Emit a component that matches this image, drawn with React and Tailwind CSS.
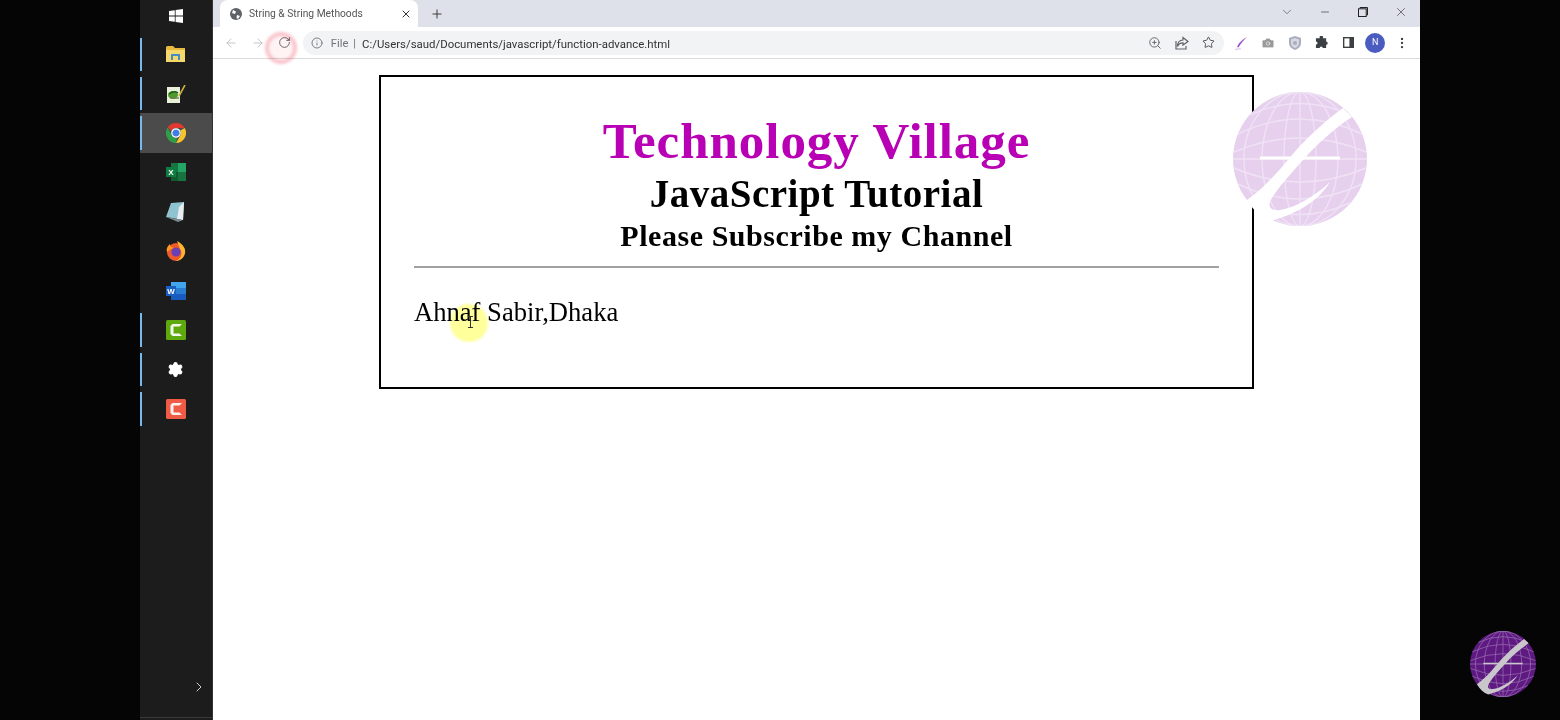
import React from 'react';
import { ArrowLeft, ArrowRight, RotateCw, Info, ZoomIn, Star, Camera, Plus, X, Minus, ChevronDown, ChevronRight, EllipsisVertical, Settings } from 'lucide-react';

// globe logo, used as the big watermark and the small corner badge
const Globe = ({ fill, line, swoosh, className }) => (
  <svg viewBox="0 0 134 134" className={className}>
    <circle cx="67" cy="67" r="67" fill={fill} />
    <g fill="none" stroke={line} strokeWidth="1.4">
      <ellipse cx="67" cy="67" rx="16" ry="67" />
      <ellipse cx="67" cy="67" rx="38" ry="67" />
      <ellipse cx="67" cy="67" rx="56" ry="67" />
      <path d="M67 0V134" />
      <path d="M0 67H134" />
      <path d="M17 23Q67 0 117 23" />
      <path d="M5 42Q67 12 129 42" />
      <path d="M5 92Q67 122 129 92" />
      <path d="M17 111Q67 134 117 111" />
      <path d="M1 60Q67 32 133 60" />
      <path d="M1 76Q67 104 133 76" />
    </g>
    <path d="M27 66H107" stroke={swoosh} strokeWidth="3" />
    <path
      d="M110 16C88 32 72 48 59 63C48 76 32 96 14 108C20 118 28 126 37 129C57 124 84 112 97 90C82 104 62 116 47 118C39 119 35 116 37 110C40 102 52 88 70 68C84 52 102 36 119 25Z"
      fill={swoosh}
    />
  </svg>
);

const WindowsIcon = () => (
  <svg viewBox="0 0 14 14" className="w-[14px] h-[14px]" fill="#fff">
    <path d="M0 2L5.8 1.2V6.6H0ZM6.6 1L14 0V6.6H6.6ZM0 7.4H5.8V12.8L0 12ZM6.6 7.4H14V14L6.6 13Z" />
  </svg>
);

const FolderIcon = () => (
  <svg viewBox="0 0 19 16" className="w-[19px] h-[16px]">
    <path d="M0 1.5Q0 0 1.5 0H7L9 2H19V16H0Z" fill="#e8b93f" />
    <path d="M0 4H19V16H0Z" fill="#f6d76b" />
    <path d="M5 8H14V14H5Z" fill="#3f8fc4" />
    <path d="M7 10H12V14H7Z" fill="#f6d76b" />
  </svg>
);

const NotesIcon = () => (
  <svg viewBox="0 0 20 18" className="w-[20px] h-[18px]">
    <path d="M1 2H14V18H1Z" fill="#e9f1d8" />
    <ellipse cx="7" cy="10" rx="5" ry="4" fill="#4f9a2f" />
    <path d="M3 9Q8 5 12 8" stroke="#1f5c16" strokeWidth="1.4" fill="none" />
    <path d="M4 13H13" stroke="#6b7f4a" strokeWidth="1.4" />
    <path d="M13 11L19 0" stroke="#c9b43c" strokeWidth="1.6" />
  </svg>
);

const ChromeIcon = ({ size = 20 }) => (
  <svg viewBox="0 0 20 20" width={size} height={size}>
    <path d="M10 0A10 10 0 0 1 18.7 5H10A5 5 0 0 0 5.5 8L1.7 4.4A10 10 0 0 1 10 0Z" fill="#e0392f" />
    <path d="M18.7 5A10 10 0 0 1 10 20L14.3 12.5A5 5 0 0 0 14.3 7.5Z" fill="#f7c52b" />
    <path d="M10 20A10 10 0 0 1 1.7 4.4L5.7 12.5A5 5 0 0 0 11 15Z" fill="#2f9e49" />
    <circle cx="10" cy="10" r="4.2" fill="#3f7fe0" stroke="#fff" strokeWidth="1.2" />
  </svg>
);

const ExcelIcon = () => (
  <svg viewBox="0 0 20 18" className="w-[20px] h-[18px]">
    <path d="M5 0H20V18H5Z" fill="#17733f" />
    <path d="M12 0H20V9H12Z" fill="#23a566" />
    <path d="M5 9H12V18H5Z" fill="#0f5c31" />
    <rect x="0" y="4" width="10" height="10" fill="#107c41" />
    <text x="5" y="12" fontSize="8" fontWeight="700" fill="#fff" textAnchor="middle" fontFamily="Liberation Sans, sans-serif">X</text>
  </svg>
);

const PadIcon = () => (
  <svg viewBox="0 0 20 20" className="w-[20px] h-[20px]">
    <path d="M5 1L18 0L17 18L0 15Z" fill="#8fc3cf" />
    <path d="M13 5L18 0L17 18L11 17Z" fill="#e8ecec" />
    <path d="M0 15L11 17L17 18L12 20Z" fill="#7a8a8e" />
  </svg>
);

const FirefoxIcon = () => (
  <svg viewBox="0 0 20 20" className="w-[20px] h-[20px]">
    <circle cx="10" cy="11" r="9" fill="#ef5a2a" />
    <path d="M11 0C17 3 20 8 19 12C18 17 13 20 10 20C15 18 17 12 14 8C13 5 12 3 11 0Z" fill="#ffb52e" />
    <path d="M1 11C0 7 2 5 4 3C4 6 6 6 8 7C4 8 3 10 1 11Z" fill="#ff9a1f" />
    <circle cx="10" cy="11" r="4.6" fill="#6b3fb5" />
  </svg>
);

const WordIcon = () => (
  <svg viewBox="0 0 20 18" className="w-[20px] h-[18px]">
    <path d="M5 0H20V18H5Z" fill="#185abd" />
    <path d="M5 0H20V6H5Z" fill="#41a5ee" />
    <path d="M5 6H20V12H5Z" fill="#2b7cd3" />
    <rect x="0" y="4" width="10" height="10" fill="#1a5fc0" />
    <text x="5" y="12" fontSize="8" fontWeight="700" fill="#fff" textAnchor="middle" fontFamily="Liberation Sans, sans-serif">W</text>
  </svg>
);

const CamtasiaIcon = ({ bg }) => (
  <svg viewBox="0 0 20 20" className="w-[20px] h-[20px]">
    <rect width="20" height="20" rx="1.5" fill={bg} />
    <path d="M16 4H6.5L4.5 6V14L6.5 16H16L13.5 13.5H7.5V6.5H13.5Z" fill="#fff" opacity="0.92" />
  </svg>
);

const ShareIcon = () => (
  <svg viewBox="0 0 14 14" className="w-[14px] h-[14px]" fill="none" stroke="#5f6368" strokeWidth="1.2">
    <path d="M8 1.5L13 5.5L8 9V6.8C5 6.8 3.5 8 2.5 10.5C2.5 6.5 4.5 4.2 8 4Z" />
    <path d="M1 5V13H11V10" />
  </svg>
);

const PenIcon = () => (
  <svg viewBox="0 0 14 14" className="w-[14px] h-[14px]">
    <path d="M13 1C9 3 5 6 3 11L4.5 11.5C7 7 10 4 13 1Z" fill="#9b59c9" />
    <path d="M1 13.5Q4 12.5 7 13" stroke="#d7bce8" strokeWidth="1" fill="none" />
  </svg>
);

const ShieldIcon = () => (
  <svg viewBox="0 0 12 14" className="w-[12px] h-[14px]">
    <path d="M6 0L12 2V7C12 10.5 9 13 6 14C3 13 0 10.5 0 7V2Z" fill="#a9adbd" />
    <path d="M6 2L10 3.4V7C10 9.5 8 11.2 6 12C4 11.2 2 9.5 2 7V3.4Z" fill="#d6d8e2" />
    <circle cx="6" cy="7" r="2" fill="#a9adbd" />
  </svg>
);

const PuzzleIcon = () => (
  <svg viewBox="0 0 14 14" className="w-[13px] h-[13px]" fill="#3c4043">
    <path d="M5 0.5A1.7 1.7 0 0 1 8.4 2.5H12V6A1.7 1.7 0 1 1 12 9.4V13H8.4A1.7 1.7 0 1 0 5 13H1V9.2A1.7 1.7 0 1 0 1 5.8V2.5H5Z" />
  </svg>
);

const PanelIcon = () => (
  <svg viewBox="0 0 12 12" className="w-[11px] h-[11px]">
    <rect x="0.75" y="0.75" width="10.5" height="10.5" fill="#fff" stroke="#3c4043" strokeWidth="1.5" />
    <rect x="7" y="0" width="5" height="12" fill="#3c4043" />
  </svg>
);

const RestoreIcon = () => (
  <svg viewBox="0 0 10 10" className="w-[10px] h-[10px]" fill="none" stroke="#222" strokeWidth="1">
    <rect x="0.5" y="1.8" width="7.7" height="7.7" />
    <path d="M2 1.5V0.5H9.5V8H8.4" />
  </svg>
);

const dockItems = [
  { id: 'files', icon: <FolderIcon />, pinned: true },
  { id: 'notes', icon: <NotesIcon />, pinned: true },
  { id: 'chrome', icon: <ChromeIcon />, pinned: true, active: true },
  { id: 'excel', icon: <ExcelIcon /> },
  { id: 'pad', icon: <PadIcon /> },
  { id: 'firefox', icon: <FirefoxIcon /> },
  { id: 'word', icon: <WordIcon /> },
  { id: 'camtasia', icon: <CamtasiaIcon bg="#5fa80e" />, pinned: true },
  { id: 'settings', icon: <Settings size={17} color="#fff" fill="#fff" strokeWidth={1.5} />, pinned: true },
  { id: 'recorder', icon: <CamtasiaIcon bg="#ef5b45" />, pinned: true },
];

const Dock = () => (
  <aside className="w-[73px] h-full shrink-0 bg-[#1c1c1c] border-r border-[#333] flex flex-col relative">
    <div className="h-[34.6px] flex items-center justify-center pr-[1px] pb-[3px]">
      <WindowsIcon />
    </div>
    {dockItems.map((item) => (
      <div
        key={item.id}
        className={`h-[39.4px] flex items-center justify-center relative pr-[1px] ${item.active ? 'bg-[#4b4b4b]' : ''}`}
      >
        {item.pinned && <span className="absolute left-0 top-[3px] bottom-[3px] w-[2px] bg-[#76b9ed]" />}
        {item.icon}
      </div>
    ))}
    <div className="mt-auto flex justify-end pr-[5px] pb-[25px]">
      <ChevronRight size={16} color="#cfcfcf" strokeWidth={1.5} />
    </div>
    <div className="absolute left-0 right-0 bottom-[2px] h-px bg-[#3a3a3a]" />
  </aside>
);

const TabStrip = () => (
  <div className="h-[27px] bg-[#dee1e9] flex items-center shrink-0">
    <div className="ml-[7px] w-[198px] h-full bg-white rounded-t-[8px] flex items-center pl-[10px] pr-[6px]">
      <svg viewBox="0 0 12 12" className="w-[12px] h-[12px] mr-[7px]">
        <circle cx="6" cy="6" r="6" fill="#5f6368" />
        <path d="M3 2L6 3.5L5 6L2 5ZM7 7L10 8L8 11L6.5 10Z" fill="#fff" />
      </svg>
      <span className="text-[10.25px] text-[#555] flex-1 whitespace-nowrap">String &amp; String Methoods</span>
      <X size={12} color="#333" strokeWidth={2} />
    </div>
    <div className="ml-[12px]">
      <Plus size={14} color="#333" strokeWidth={1.6} />
    </div>
    <div className="ml-auto flex items-center pb-[3px]">
      <ChevronDown size={14} color="#555" strokeWidth={1.2} />
      <span className="w-[38px] flex justify-center ml-[12px]"><Minus size={12} color="#222" strokeWidth={1.2} /></span>
      <span className="w-[38px] flex justify-center"><RestoreIcon /></span>
      <span className="w-[38px] flex justify-center"><X size={14} color="#222" strokeWidth={1} /></span>
    </div>
  </div>
);

const ToolSlot = ({ children }) => (
  <span className="w-[26.6px] flex justify-center items-center shrink-0">{children}</span>
);

const ExtSlot = ({ children }) => (
  <span className="w-[26.8px] flex justify-center items-center shrink-0">{children}</span>
);

const Toolbar = () => (
  <div className="h-[32px] bg-white border-b border-[#dcdcdc] flex items-center pl-[5px] shrink-0">
    <ToolSlot><ArrowLeft size={14} color="#bcbfc4" strokeWidth={1.5} /></ToolSlot>
    <ToolSlot><ArrowRight size={14} color="#bcbfc4" strokeWidth={1.5} /></ToolSlot>
    <ToolSlot><RotateCw size={13} color="#55585c" strokeWidth={1.6} /></ToolSlot>
    <div className="ml-[5px] w-[921px] h-[24px] rounded-full bg-[#f1f3f4] flex items-center pl-[8px] pr-[2px]">
      <Info size={12} color="#5f6368" strokeWidth={1.6} />
      <span className="ml-[8px] mt-[4px] text-[11.2px] text-[#70757a]">File</span>
      <span className="ml-[5px] mt-[4px] text-[11.2px] text-[#70757a]">|</span>
      <span className="ml-[6px] mt-[4px] text-[11.4px] text-[#333]">C:/Users/saud/Documents/javascript/function-advance.html</span>
      <div className="ml-auto flex items-center">
        <ToolSlot><ZoomIn size={14} color="#5f6368" strokeWidth={1.6} /></ToolSlot>
        <ToolSlot><ShareIcon /></ToolSlot>
        <ToolSlot><Star size={13} color="#3c4043" strokeWidth={1.6} /></ToolSlot>
      </div>
    </div>
    <div className="ml-[4px] flex items-center">
      <ExtSlot><PenIcon /></ExtSlot>
      <ExtSlot><Camera size={14} color="#fff" fill="#9a9a9a" strokeWidth={1} /></ExtSlot>
      <ExtSlot><ShieldIcon /></ExtSlot>
      <ExtSlot><PuzzleIcon /></ExtSlot>
      <ExtSlot><PanelIcon /></ExtSlot>
      <ExtSlot>
        <span className="w-[20px] h-[20px] rounded-full bg-[#4a5cc0] text-white text-[9px] flex items-center justify-center">N</span>
      </ExtSlot>
      <ExtSlot><EllipsisVertical size={14} color="#3c4043" strokeWidth={2} /></ExtSlot>
    </div>
  </div>
);

const Page = () => (
  <div className="flex-1 bg-white pt-[16px] pl-[166px]">
    <div className="w-[875px] h-[314px] border-2 border-black px-[33px] pt-[33px] font-['Liberation_Serif',serif] text-black">
      <h1 className="text-[51px] leading-[62px] font-bold text-center text-[#b800b4] tracking-[0.95px]">Technology Village</h1>
      <h2 className="text-[39px] leading-[44px] font-bold text-center tracking-[0.5px]">JavaScript Tutorial</h2>
      <h3 className="text-[30px] leading-[39px] font-bold text-center tracking-[0.55px]">Please Subscribe my Channel</h3>
      <hr className="mt-[11px] border-0 h-[2px] bg-[#a0a0a0]" />
      <p className="mt-[27px] text-[26.6px] leading-[34px]">Ahnaf Sabir,Dhaka</p>
    </div>
  </div>
);

export default function App() {
  return (
    <div className="w-[1560px] h-[720px] bg-[#050505] flex px-[140px] overflow-hidden relative font-['Roboto',sans-serif]">
      <Dock />
      <main className="flex-1 flex flex-col min-w-0">
        <TabStrip />
        <Toolbar />
        <Page />
      </main>

      {/* click ring on reload */}
      <span className="absolute left-[265px] top-[32px] w-[32px] h-[32px] rounded-full border-[4px] border-[#f9c3ca] bg-[#fff3f4] mix-blend-multiply blur-[1.5px]" />
      {/* cursor highlight */}
      <span className="absolute left-[450px] top-[304px] w-[38px] h-[38px] rounded-full bg-[#ffff9c] mix-blend-multiply blur-[1px]" />
      <span className="absolute left-[470px] top-[317px] w-px h-[10px] bg-[#333]" />
      <span className="absolute left-[468px] top-[316px] w-[5px] h-px bg-[#333]" />
      <span className="absolute left-[468px] top-[327px] w-[5px] h-px bg-[#333]" />

      <div className="absolute left-[1233px] top-[92px] w-[134px] h-[134px] blur-[0.5px]">
        <Globe fill="#e6d0ee" line="#f0e2f5" swoosh="#ffffff" className="w-full h-full" />
      </div>
      <div className="absolute left-[1470px] top-[631px] w-[66px] h-[66px] blur-[0.5px]">
        <Globe fill="#5f1a82" line="#9b72b2" swoosh="#c9c6cc" className="w-full h-full" />
      </div>
    </div>
  );
}
